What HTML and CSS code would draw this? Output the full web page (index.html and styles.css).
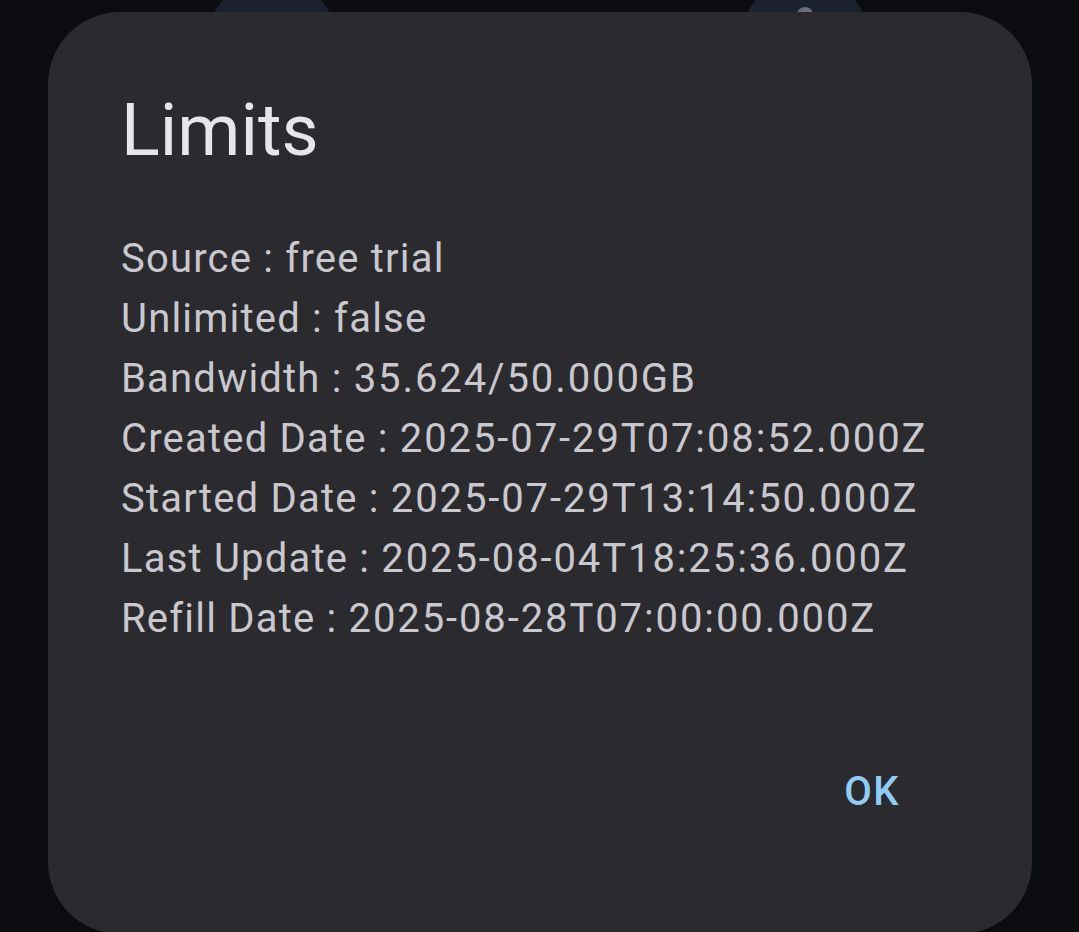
FILE: index.html
```html
<!DOCTYPE html>
<html lang="en">
<head>
    <meta charset="UTF-8">
    <meta name="viewport" content="width=device-width, initial-scale=1.0">
    <title>Limits</title>
    <link rel="stylesheet" href="styles.css">
</head>
<body>
    <div class="behind">
        <div class="fab fab-left"></div>
        <div class="fab fab-right"><span class="fab-dot"></span></div>
    </div>

    <div class="dialog">
        <h2 class="dialog-title">Limits</h2>
        <div class="dialog-body">
            <div class="line">Source : free trial</div>
            <div class="line">Unlimited : false</div>
            <div class="line">Bandwidth : <span class="num">35.624/50.000GB</span></div>
            <div class="line">Created Date : <span class="num">2025-07-29T07:08:52.000Z</span></div>
            <div class="line">Started Date : <span class="num">2025-07-29T13:14:50.000Z</span></div>
            <div class="line">Last Update : <span class="num">2025-08-04T18:25:36.000Z</span></div>
            <div class="line">Refill Date : <span class="num">2025-08-28T07:00:00.000Z</span></div>
        </div>
        <div class="dialog-actions">
            <button class="ok-btn">OK</button>
        </div>
    </div>
</body>
</html>
```

FILE: styles.css
```css
html, body {
    margin: 0;
    padding: 0;
    height: 100%;
}
body {
    background-color: #0b0c0f;
    font-family: 'Roboto', 'Noto Sans', sans-serif;
    overflow: hidden;
    position: relative;
    padding: 12px 47px 0 48px;
    box-sizing: border-box;
}
.behind {
    position: absolute;
    top: 0;
    left: 0;
    right: 0;
    height: 120px;
}
.fab {
    position: absolute;
    top: -23px;
    width: 130px;
    height: 130px;
    border-radius: 50%;
    background-color: #1c2130;
}
.fab-left {
    left: 207px;
}
.fab-right {
    left: 740px;
}
.fab-dot {
    position: absolute;
    top: 30px;
    left: 57px;
    width: 16px;
    height: 16px;
    border-radius: 50%;
    background-color: #6b6f7a;
}
.dialog {
    position: relative;
    background-color: #2b2a2f;
    border-radius: 72px;
    height: 922px;
    padding: 77px 132px 0 73px;
    box-sizing: border-box;
}
.dialog-title {
    margin: 0;
    font-size: 72px;
    font-weight: 400;
    line-height: 84px;
    color: #e6e5ea;
}
.dialog-body {
    margin-top: 56px;
    font-size: 40px;
    line-height: 60px;
    letter-spacing: 1.2px;
    color: #c9c8ce;
}
.line {
    white-space: nowrap;
}
.num {
    letter-spacing: 1.9px;
}
.dialog-actions {
    display: flex;
    justify-content: flex-end;
    margin-top: 113px;
}
.ok-btn {
    background: none;
    border: none;
    padding: 0;
    font-family: inherit;
    font-size: 40px;
    font-weight: 500;
    line-height: 60px;
    letter-spacing: 1.5px;
    color: #8fcdf7;
    cursor: pointer;
}
```
